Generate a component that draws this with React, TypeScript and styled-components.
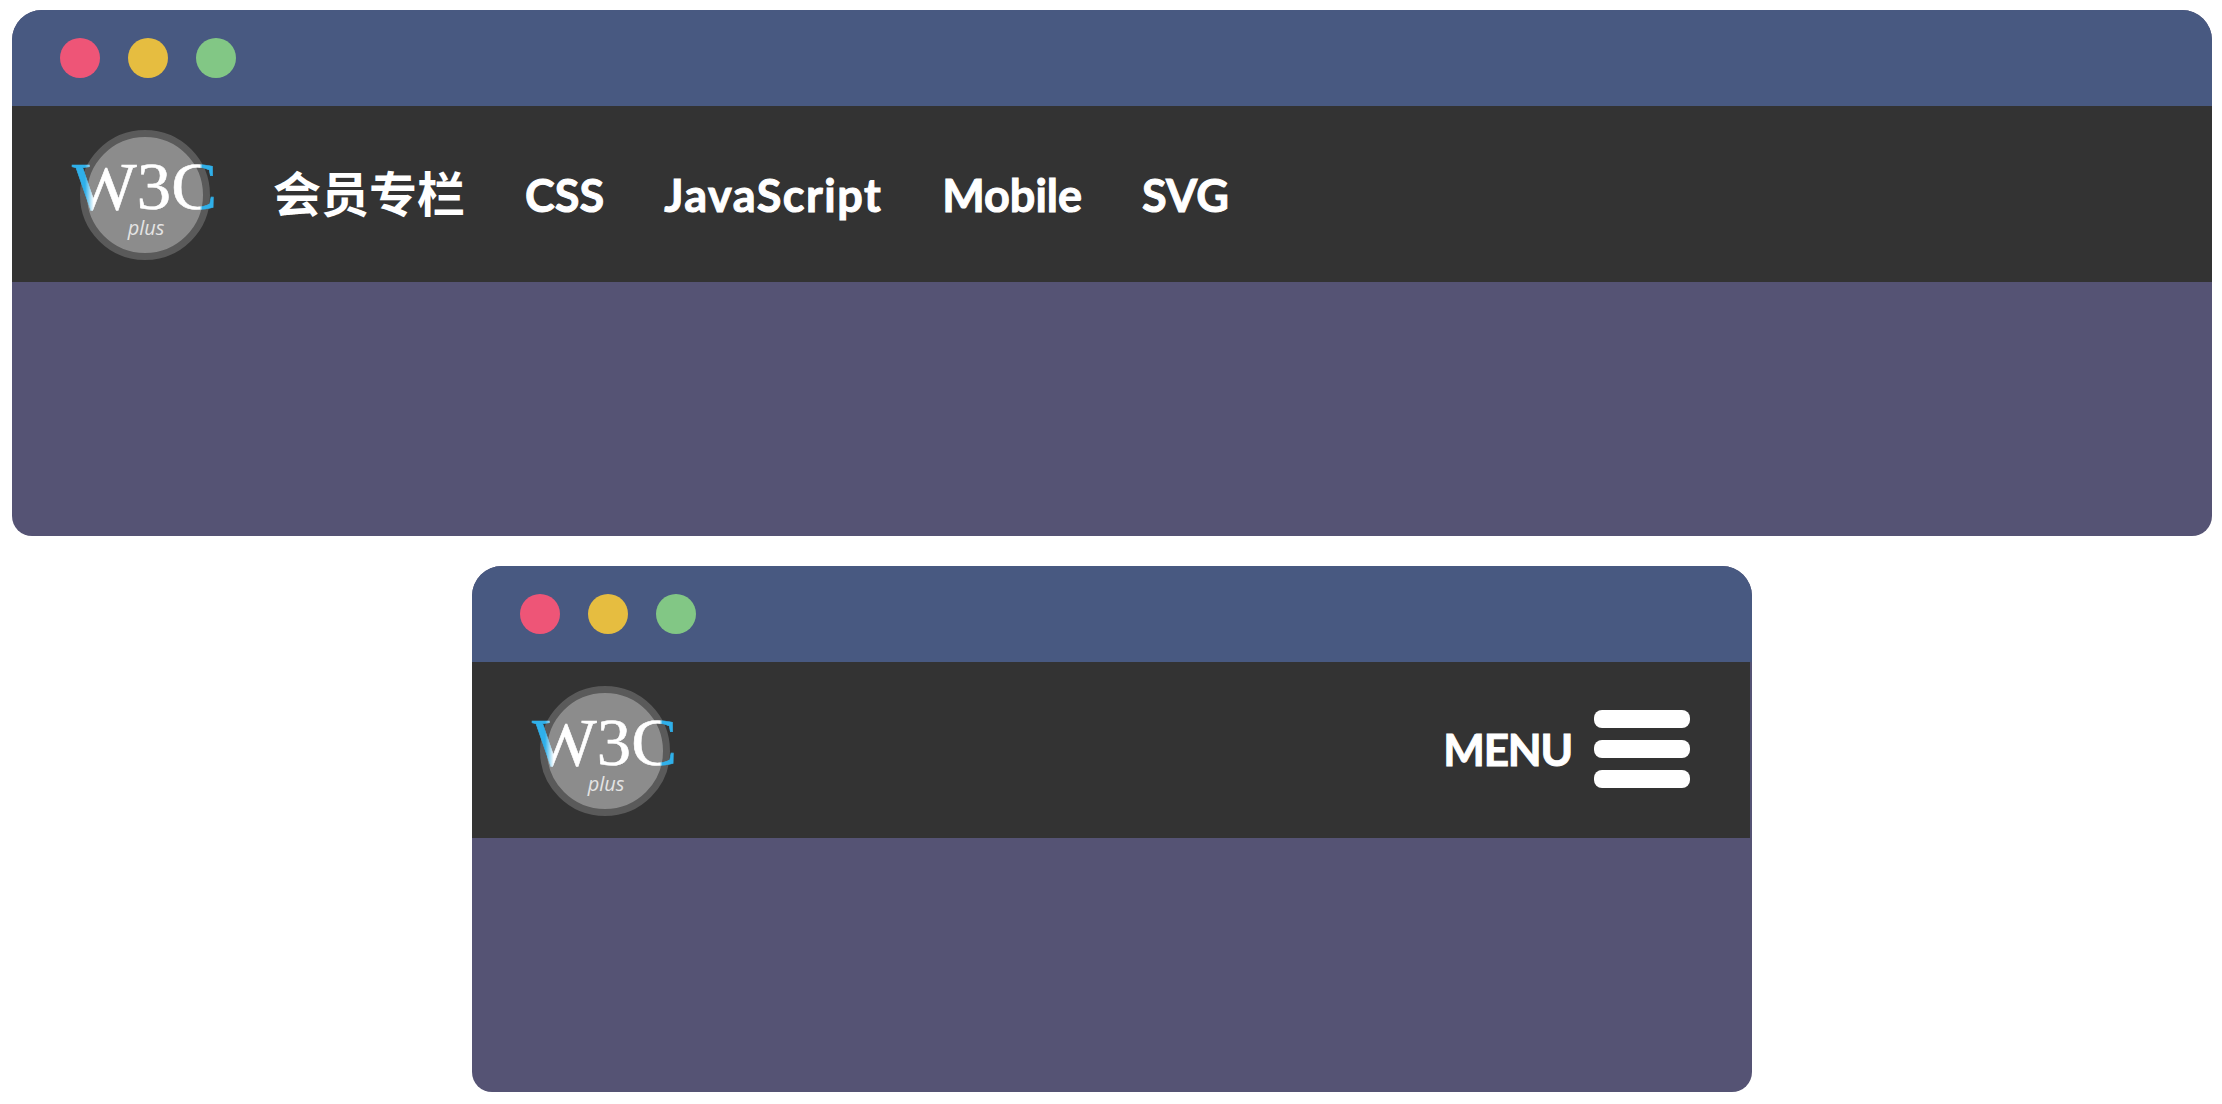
import styled, { createGlobalStyle } from "styled-components";

const GlobalStyle = createGlobalStyle`
  html, body {
    margin: 0;
    padding: 0;
    background: #fff;
  }
`;

const Page = styled.div`
  width: 2200px;
  margin: 0 0 0 12px;
  padding-top: 10px;
  display: flex;
  flex-direction: column;
  align-items: center;
  gap: 30px;
`;

const Browser = styled.section<{ $width: number }>`
  width: ${(props) => props.$width}px;
  height: 526px;
  display: flex;
  flex-direction: column;
  border-radius: 30px 30px 20px 20px;
  overflow: hidden;
  background: #555374;
`;

const TitleBar = styled.div`
  height: 96px;
  flex: none;
  display: flex;
  align-items: center;
  gap: 28px;
  padding: 0 48px;
  background: #485981;
`;

const Dot = styled.span<{ color: string }>`
  width: 40px;
  height: 40px;
  border-radius: 50%;
  background: ${(props) => props.color};
`;

const NavBar = styled.nav<{ $inset?: number }>`
  height: 176px;
  flex: none;
  box-sizing: border-box;
  margin-right: ${(props) => props.$inset ?? 0}px;
  padding: 0 60px;
  display: flex;
  align-items: center;
  background: #333;
  color: #fff;
`;

const LogoSvg = styled.svg`
  display: block;
  flex: none;
  margin: 2px 29px 0 0;
  overflow: visible;
`;

const Links = styled.ul`
  list-style: none;
  margin: 0;
  padding: 0 0 4px;
  display: flex;
  align-items: baseline;
`;

const LinkItem = styled.li<{ $tracking?: number }>`
  padding: 0 30px;
  font: 700 45px/1 Lato, "Noto Sans CJK SC", sans-serif;
  letter-spacing: ${(props) => props.$tracking ?? 0}px;
  -webkit-text-stroke: 1px #fff;
`;

const CjkLabel = styled.span`
  font: 700 48px/1 "Noto Sans CJK SC", sans-serif;
  -webkit-text-stroke: 0;
`;

const MenuToggle = styled.div`
  margin-left: auto;
  display: flex;
  align-items: center;
  gap: 22px;
`;

const MenuLabel = styled.span`
  padding-bottom: 2px;
  font: 700 44px/1 Lato, sans-serif;
  letter-spacing: -1.2px;
  -webkit-text-stroke: 1px #fff;
`;

const Burger = styled.div`
  width: 96px;
  margin-top: -2px;
  display: flex;
  flex-direction: column;
  gap: 12px;
  span {
    height: 18px;
    border-radius: 8px;
    background: #fff;
  }
`;

const Logo = ({ id }: { id: string }) => (
  <LogoSvg width="142" height="130" viewBox="0 0 142 130">
    <defs>
      <linearGradient id={id} x1="0" y1="0" x2="1" y2="0">
        <stop offset="0.09" stopColor="#2fb0ea" />
        <stop offset="0.15" stopColor="#ffffff" />
        <stop offset="0.88" stopColor="#ffffff" />
        <stop offset="0.9" stopColor="#2fb0ea" />
      </linearGradient>
    </defs>
    <circle cx="73" cy="65" r="61.5" fill="#8c8c8c" stroke="#5a5a5a" strokeWidth="7" />
    <text
      x="0"
      y="79"
      fontFamily="'Liberation Serif', serif"
      fontSize="68"
      textLength="145"
      lengthAdjust="spacingAndGlyphs"
      fill={`url(#${id})`}
      stroke={`url(#${id})`}
      strokeWidth="0.6"
    >
      W3C
    </text>
    <text
      x="74"
      y="105"
      textAnchor="middle"
      fontFamily="'Open Sans', sans-serif"
      fontStyle="italic"
      fontSize="20"
      fill="#e4e4e4"
    >
      plus
    </text>
  </LogoSvg>
);

const WindowDots = () => (
  <TitleBar>
    <Dot color="#ee5577" />
    <Dot color="#e6bd40" />
    <Dot color="#82c785" />
  </TitleBar>
);

const App = () => (
  <>
    <GlobalStyle />
    <Page>
      <Browser $width={2200}>
        <WindowDots />
        <NavBar>
          <Logo id="logo-wide" />
          <Links>
            <LinkItem>
              <CjkLabel>会员专栏</CjkLabel>
            </LinkItem>
            <LinkItem>CSS</LinkItem>
            <LinkItem $tracking={1.5}>JavaScript</LinkItem>
            <LinkItem>Mobile</LinkItem>
            <LinkItem>SVG</LinkItem>
          </Links>
        </NavBar>
      </Browser>
      <Browser $width={1280}>
        <WindowDots />
        <NavBar $inset={2}>
          <Logo id="logo-narrow" />
          <MenuToggle>
            <MenuLabel>MENU</MenuLabel>
            <Burger>
              <span />
              <span />
              <span />
            </Burger>
          </MenuToggle>
        </NavBar>
      </Browser>
    </Page>
  </>
);

export default App;
